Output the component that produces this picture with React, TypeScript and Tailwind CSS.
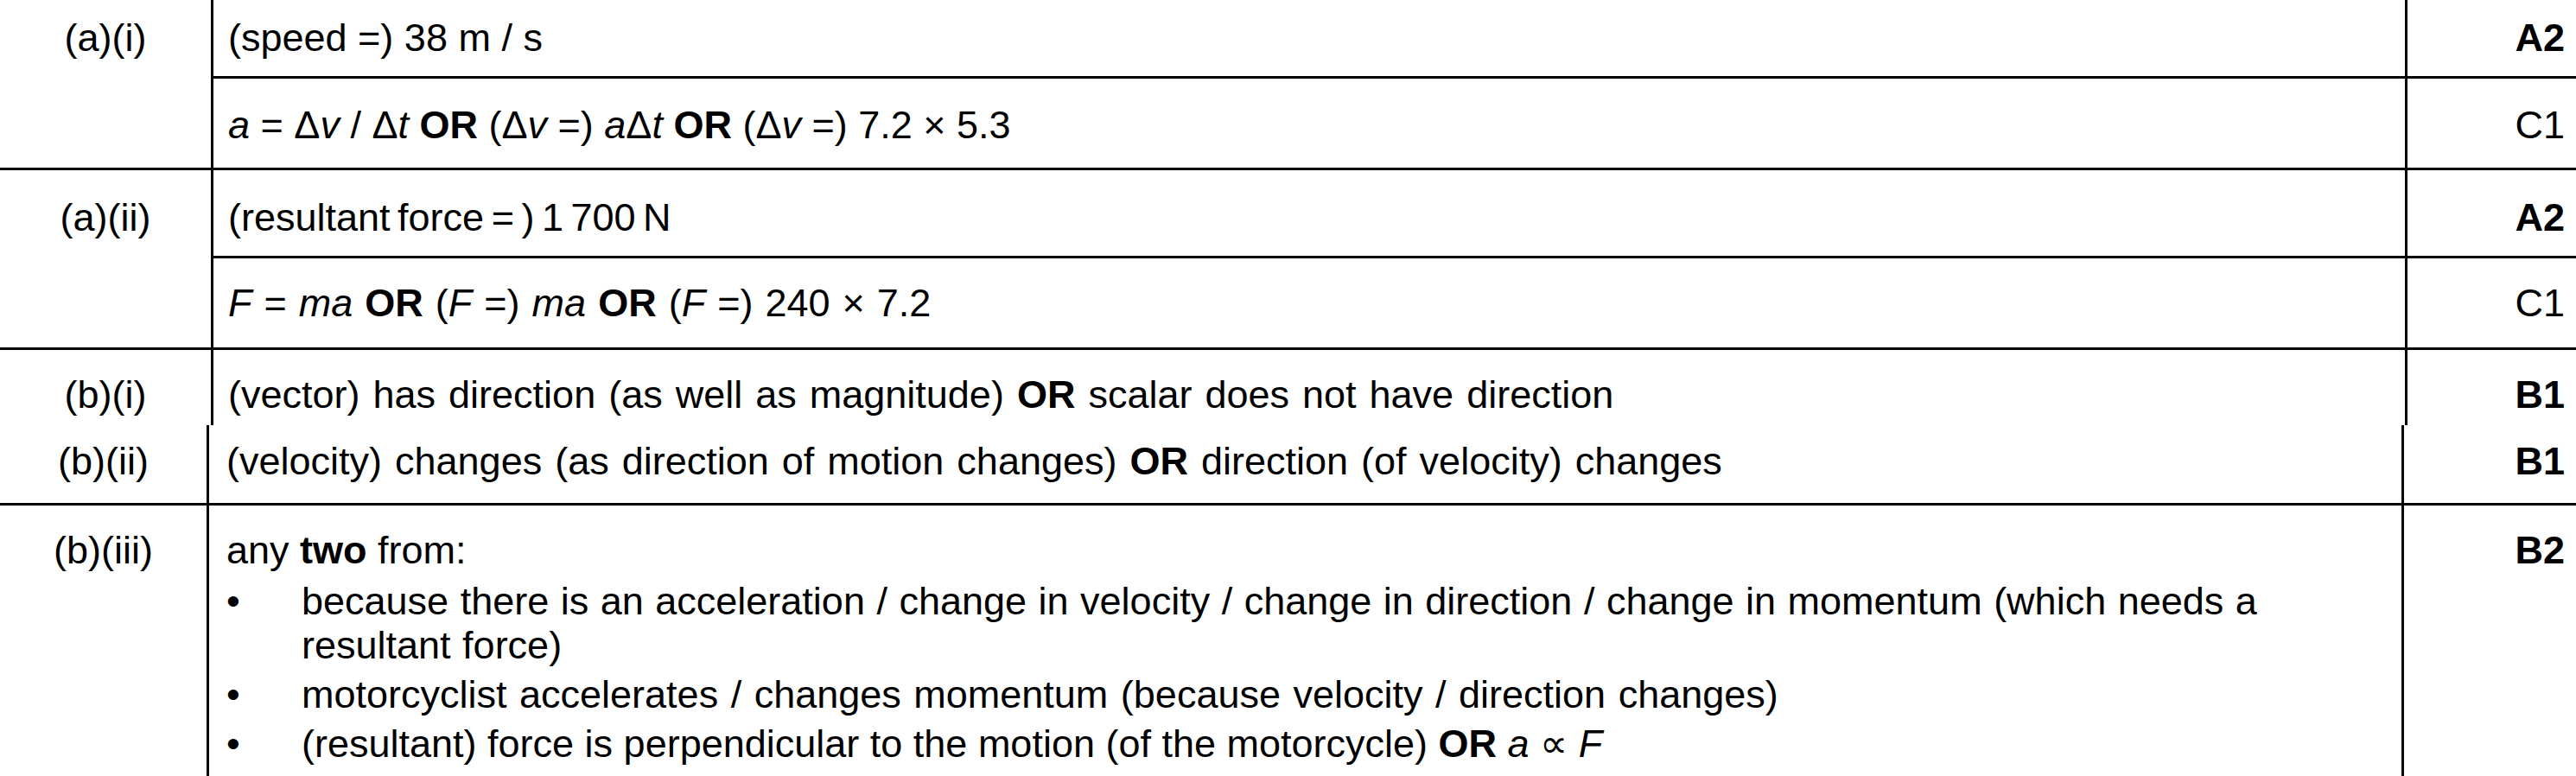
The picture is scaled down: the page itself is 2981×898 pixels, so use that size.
import React from "react";

type SubRow = { content: React.ReactNode; mark: string; bold?: boolean; h: string; pt: string };

const VLine = () => <div className="w-[3px] shrink-0 self-stretch bg-black" />;
const HLine = () => <div className="h-[3px] shrink-0 bg-black" />;

function Group({
  label,
  rows,
  labelW,
  contentW,
  markW,
  pl,
}: {
  label: string;
  rows: SubRow[];
  labelW: string;
  contentW: string;
  markW: string;
  pl: string;
}) {
  return (
    <div className="flex">
      <div className={`${labelW} shrink-0 text-center ${rows[0].pt}`}>{label}</div>
      <VLine />
      <div className="flex flex-1 flex-col">
        {rows.map((r, i) => (
          <React.Fragment key={i}>
            {i > 0 && <HLine />}
            <div className={`flex ${r.h}`}>
              <div className={`${contentW} shrink-0 ${pl} ${r.pt}`}>{r.content}</div>
              <VLine />
              <div className={`${markW} shrink-0 pr-[13px] text-right ${r.pt} ${r.bold ? "font-bold" : ""}`}>
                {r.mark}
              </div>
            </div>
          </React.Fragment>
        ))}
      </div>
    </div>
  );
}

const I = ({ children }: { children: React.ReactNode }) => <span className="italic">{children}</span>;
const B = ({ children }: { children: React.ReactNode }) => <span className="font-bold">{children}</span>;

export default function App() {
  const up = { labelW: "w-[244px]", contentW: "w-[2536px]", markW: "w-[195px]", pl: "pl-[17px]" };
  const lo = { labelW: "w-[239px]", contentW: "w-[2537px]", markW: "w-[199px]", pl: "pl-[20px]" };
  return (
    <div className="h-[898px] w-[2981px] overflow-hidden bg-white font-['Liberation_Sans',Arial,sans-serif] text-[45px] leading-[51px] text-black">
      <Group
        label="(a)(i)"
        {...up}
        rows={[
          { content: "(speed =) 38 m / s", mark: "A2", bold: true, h: "h-[88px]", pt: "pt-[18px]" },
          {
            content: (
              <>
                <I>a</I> = Δ<I>v</I> / Δ<I>t</I> <B>OR</B> (Δ<I>v</I> =) <I>a</I>Δ<I>t</I> <B>OR</B> (Δ<I>v</I> =) 7.2 × 5.3
              </>
            ),
            mark: "C1",
            h: "h-[103px]",
            pt: "pt-[28px]",
          },
        ]}
      />
      <HLine />
      <Group
        label="(a)(ii)"
        {...up}
        rows={[
          {
            content: <span className="[word-spacing:-4px]">(resultant force = ) 1 700 N</span>,
            mark: "A2",
            bold: true,
            h: "h-[99px]",
            pt: "pt-[29px]",
          },
          {
            content: (
              <span className="[word-spacing:1.5px]">
                <I>F</I> = <I>ma</I> <B>OR</B> (<I>F</I> =) <I>ma</I> <B>OR</B> (<I>F</I> =) 240 × 7.2
              </span>
            ),
            mark: "C1",
            h: "h-[103px]",
            pt: "pt-[26px]",
          },
        ]}
      />
      <HLine />
      <Group
        label="(b)(i)"
        {...up}
        rows={[
          {
            content: (
              <span className="[word-spacing:2.5px]">
                (vector) has direction (as well as magnitude) <B>OR</B> scalar does not have direction
              </span>
            ),
            mark: "B1",
            bold: true,
            h: "h-[87px]",
            pt: "pt-[26px]",
          },
        ]}
      />
      <Group
        label="(b)(ii)"
        {...lo}
        rows={[
          {
            content: (
              <span className="[word-spacing:2.5px]">
                (velocity) changes (as direction of motion changes) <B>OR</B> direction (of velocity) changes
              </span>
            ),
            mark: "B1",
            bold: true,
            h: "h-[90px]",
            pt: "pt-[16px]",
          },
        ]}
      />
      <HLine />
      <Group
        label="(b)(iii)"
        {...lo}
        rows={[
          {
            content: (
              <div className="flex flex-col">
                <div>
                  any <B>two</B> from:
                </div>
                <div className="mt-[8px] flex">
                  <div className="w-[87px] shrink-0">•</div>
                  <div className="w-[2280px] [word-spacing:1px]">
                    because there is an acceleration / change in velocity / change in direction / change in momentum (which needs a resultant force)
                  </div>
                </div>
                <div className="mt-[6px] flex">
                  <div className="w-[87px] shrink-0">•</div>
                  <div className="w-[2280px] [word-spacing:2px]">
                    motorcyclist accelerates / changes momentum (because velocity / direction changes)
                  </div>
                </div>
                <div className="mt-[6px] flex">
                  <div className="w-[87px] shrink-0">•</div>
                  <div className="w-[2280px]">
                    (resultant) force is perpendicular to the motion (of the motorcycle) <B>OR</B> <I>a</I> ∝ <I>F</I>
                  </div>
                </div>
              </div>
            ),
            mark: "B2",
            bold: true,
            h: "h-[313px]",
            pt: "pt-[26px]",
          },
        ]}
      />
    </div>
  );
}
